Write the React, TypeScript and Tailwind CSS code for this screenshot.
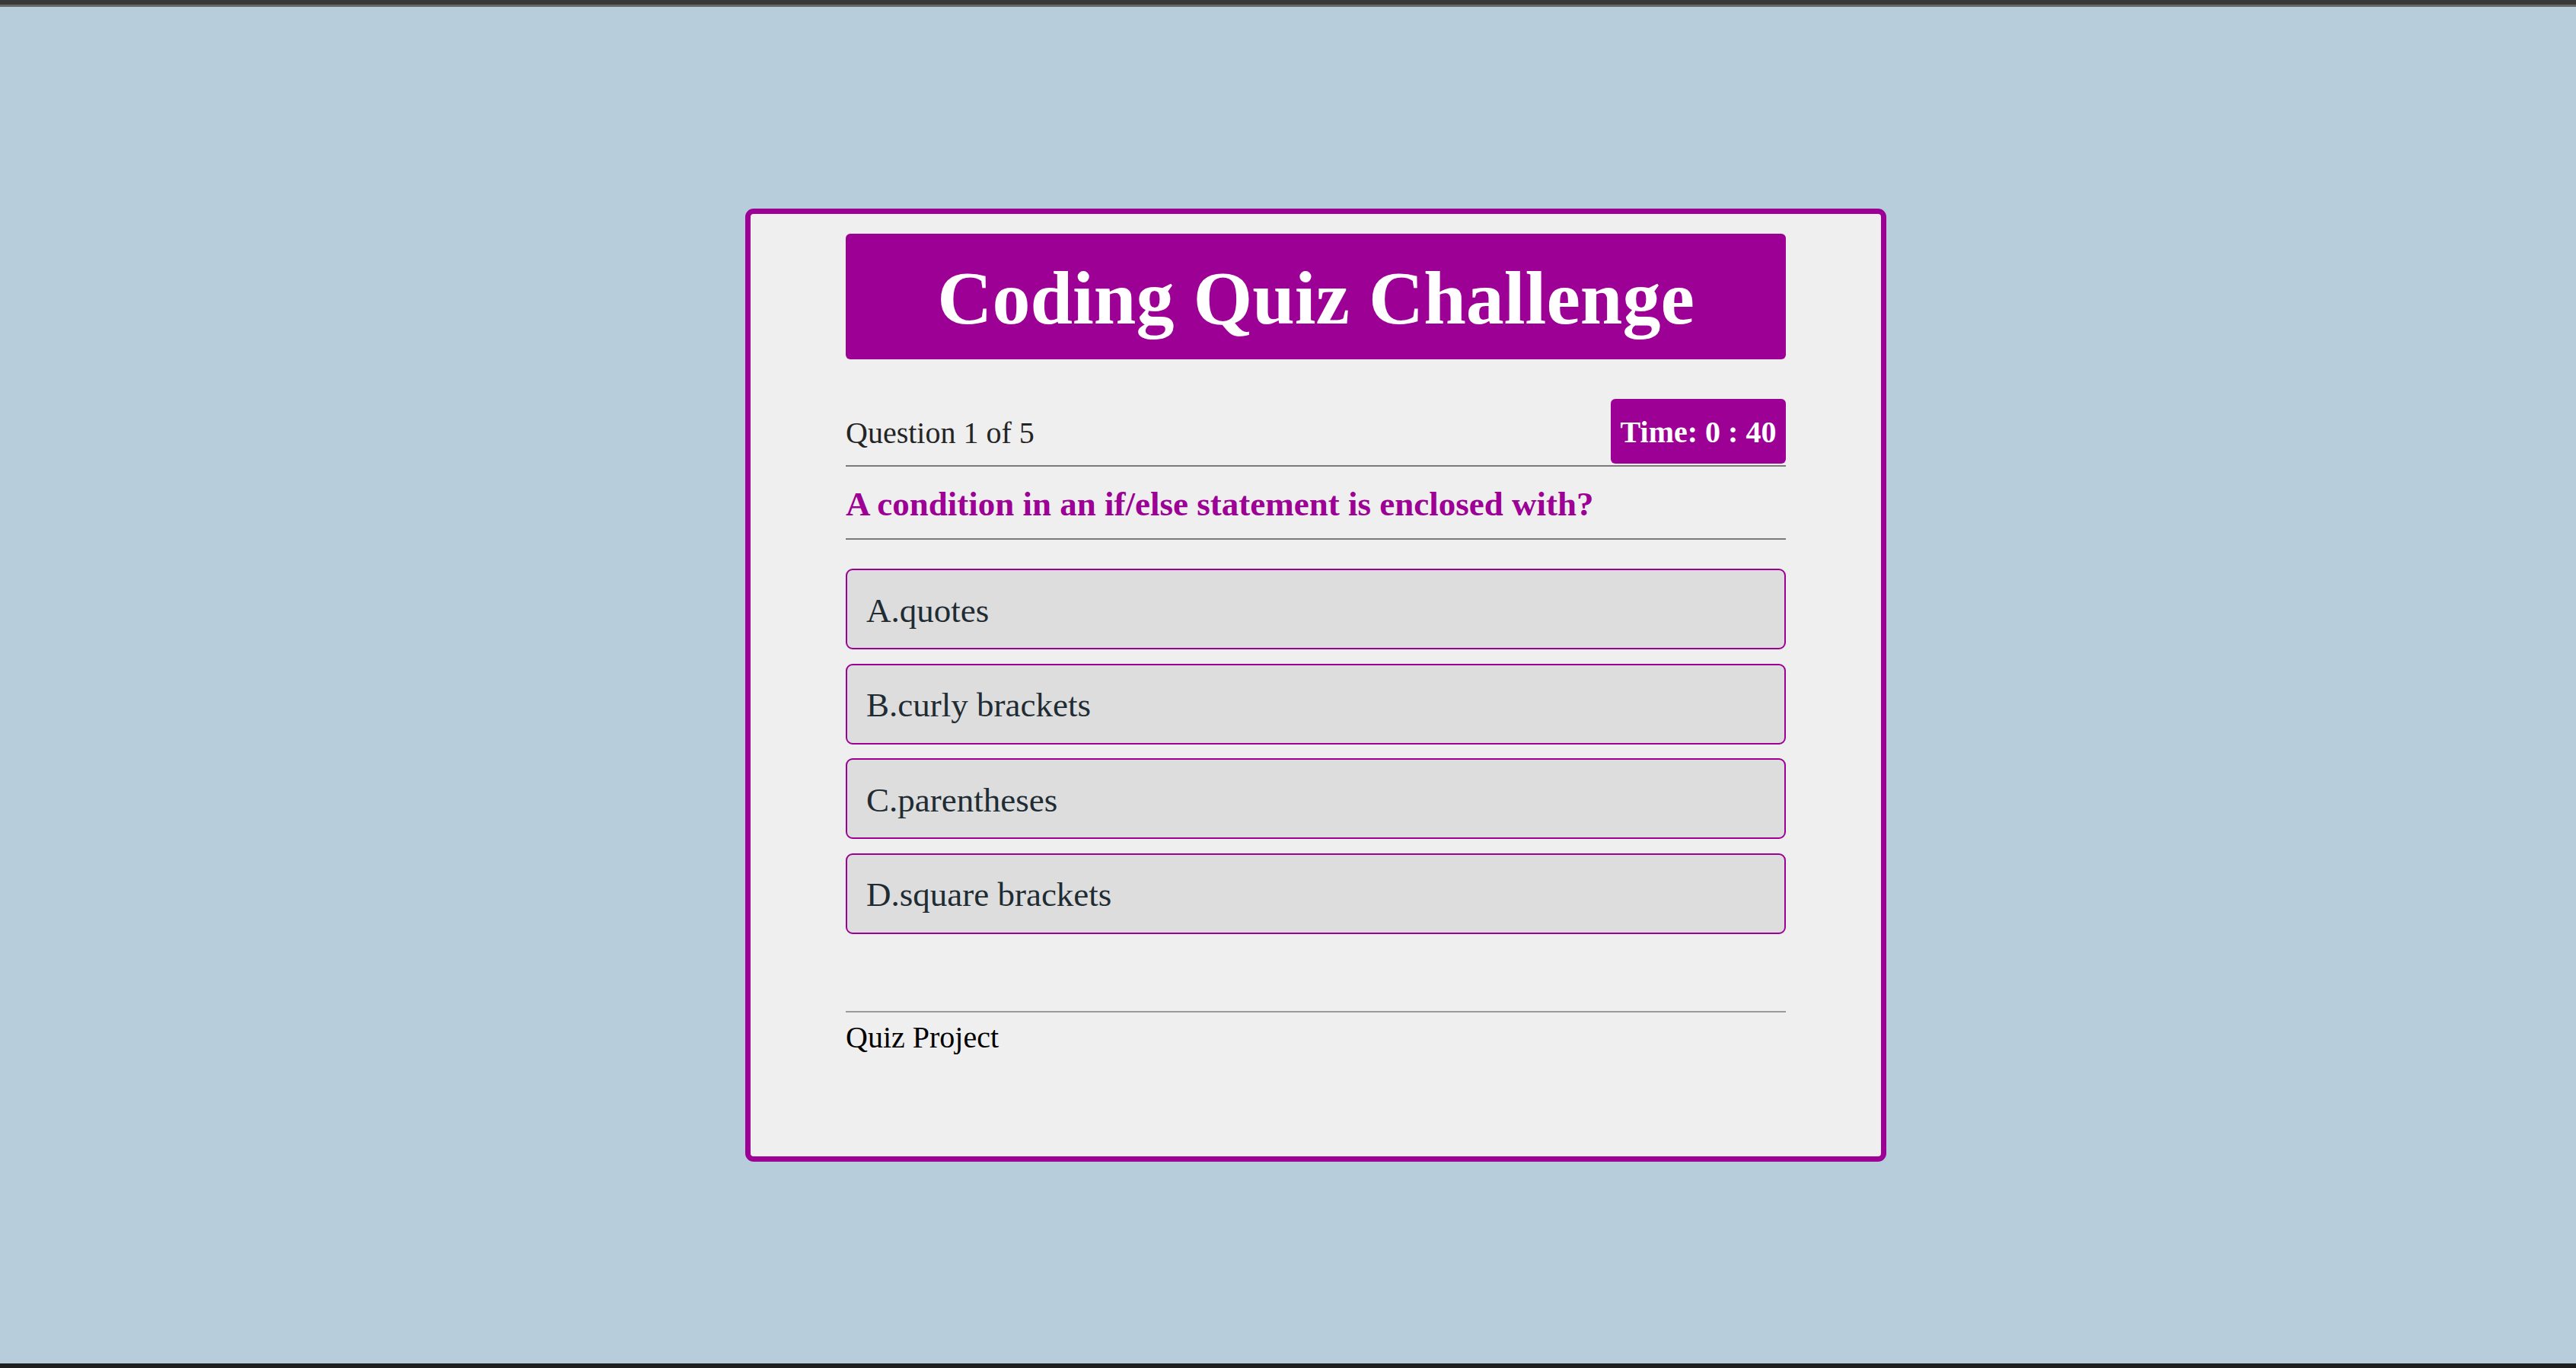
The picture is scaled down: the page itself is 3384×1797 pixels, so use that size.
const options = ["A.quotes", "B.curly brackets", "C.parentheses", "D.square brackets"];

const App = () => {
  return (
    <div className="flex h-[1797px] flex-col bg-[#b7cddb] font-['Liberation_Serif',serif]">
      <div className="h-[6px] bg-[#393939]" />
      <div className="h-[3px] bg-[#686868]" />

      <main className="flex flex-1 items-center justify-center pl-[73px]">
        <div className="w-[1499px] rounded-[11px] border-[7px] border-[#9c0094] bg-[#efefef] px-[125px] pt-[26px] pb-[133px]">
          <h1 className="rounded-[6px] bg-[#9c0094] pt-[27px] pb-[23px] text-center text-[100px] leading-[115px] font-bold text-white">
            Coding Quiz Challenge
          </h1>

          <div className="mt-[52px] flex items-end justify-between border-b-2 border-[#7a7a7a] pb-[2px]">
            <span className="mb-[17px] text-[40px] leading-[46px] text-[#252525]">Question 1 of 5</span>
            <div className="flex h-[85px] w-[230px] items-center justify-center rounded-[6px] bg-[#9c0094] pt-[3px] text-[40px] leading-[46px] font-bold text-white">
              Time: 0 : 40
            </div>
          </div>

          <h2 className="border-b-2 border-[#7a7a7a] pt-[23px] pb-[19px] text-[45px] leading-[52px] font-bold text-[#9c0094]">
            A condition in an if/else statement is enclosed with?
          </h2>

          <div className="mt-[38px] flex flex-col gap-[18.5px]">
            {options.map((opt) => (
              <button
                key={opt}
                className="flex h-[106px] items-center rounded-[9px] border-2 border-[#9c0094] bg-[#dddddd] pt-[3px] pl-[25px] text-left text-[45px] leading-[52px] text-[#1f2c33]"
              >
                {opt}
              </button>
            ))}
          </div>

          <footer className="mt-[101px] border-t-2 border-[#9a9a9a] pt-[10px]">
            <p className="text-[40px] leading-[46px] text-black">Quiz Project</p>
          </footer>
        </div>
      </main>

      <div className="h-[6px] bg-[#1f1f1f]" />
    </div>
  );
};

export default App;
